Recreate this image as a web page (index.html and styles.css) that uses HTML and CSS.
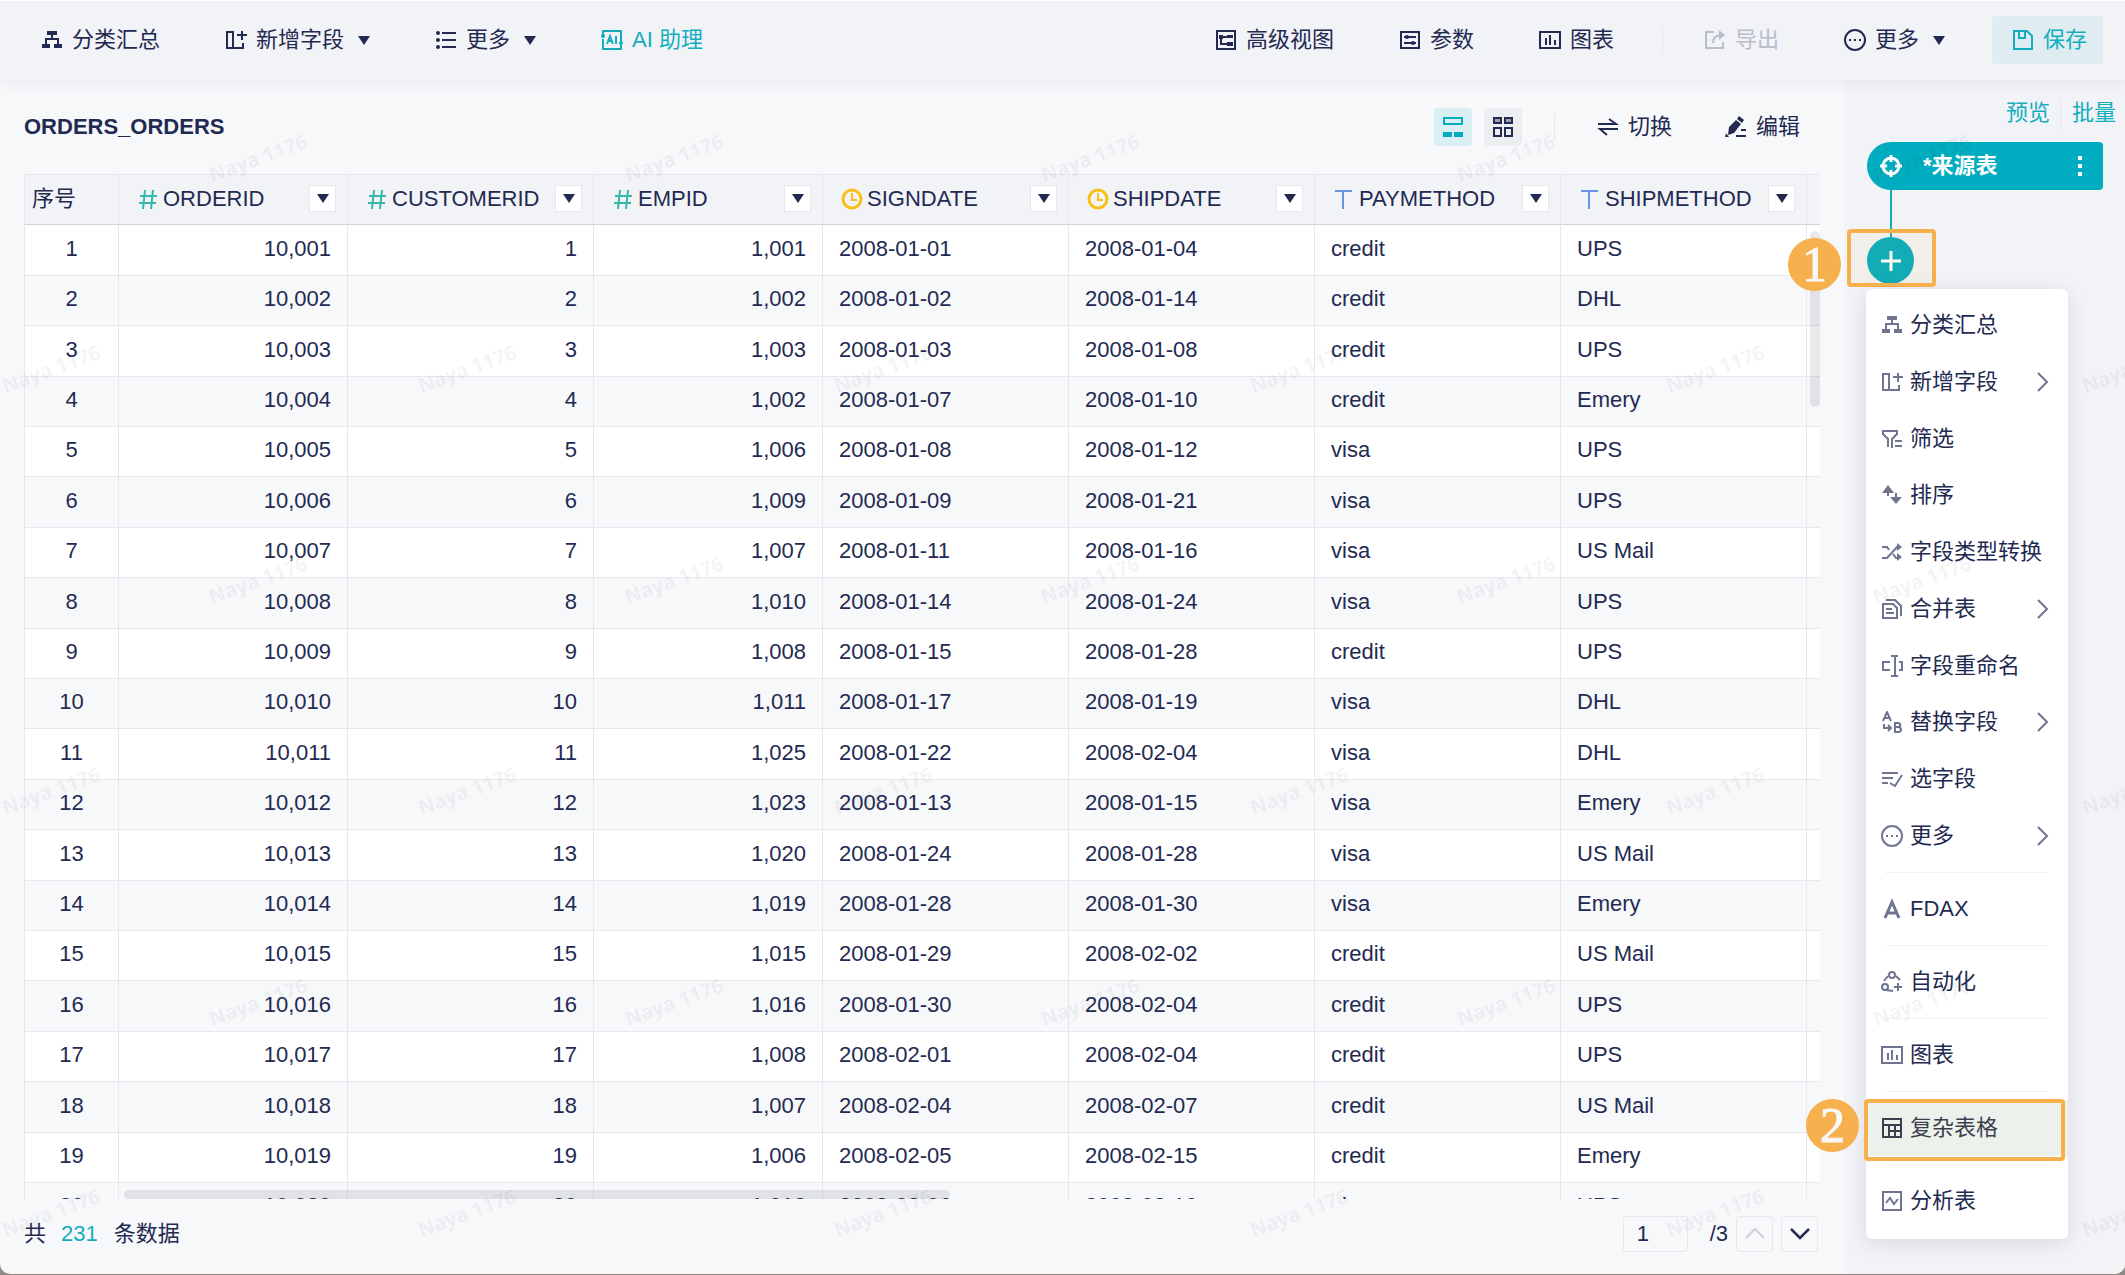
FILE: index.html
```html
<!DOCTYPE html>
<html lang="zh-CN">
<head>
    <meta charset="UTF-8">
    <meta name="viewport" content="width=device-width, initial-scale=1.0">
    <title>ORDERS_ORDERS</title>
    <link rel="stylesheet" href="styles.css">
</head>
<body>
    <!-- 图标库 -->
    <svg class="icon-library" aria-hidden="true">
        <symbol id="icon-group" viewBox="0 0 22 22">
            <path d="M6 2h10v4H6zM1 15h8v4H1zM13 15h8v4h-8z" fill="currentColor"/>
            <path d="M11 6v4M5 16v-6h12v6" fill="none" stroke="currentColor" stroke-width="2"/>
        </symbol>
        <symbol id="icon-add-field" viewBox="0 0 22 22">
            <path d="M2 3h6v16H2zM8 19h10v-5M17 2v9M12 6h10" fill="none" stroke="currentColor" stroke-width="2"/>
        </symbol>
        <symbol id="icon-list" viewBox="0 0 22 22">
            <circle cx="3" cy="4" r="2" fill="currentColor"/>
            <circle cx="3" cy="11" r="2" fill="currentColor"/>
            <circle cx="3" cy="18" r="2" fill="currentColor"/>
            <path d="M7 4h14M7 11h14M7 18h14" stroke="currentColor" stroke-width="2"/>
        </symbol>
        <symbol id="icon-ai" viewBox="0 0 22 22">
            <path d="M2 6V2h18v10M20 16v4H2V10" fill="none" stroke="currentColor" stroke-width="2"/>
            <circle cx="2" cy="7" r="2" fill="currentColor"/>
            <circle cx="20" cy="14" r="2" fill="currentColor"/>
            <path d="M6 15l3-8 3 8M7 12h4M15 7v8" fill="none" stroke="currentColor" stroke-width="2"/>
        </symbol>
        <symbol id="icon-advanced" viewBox="0 0 22 22">
            <path d="M2 2h18v18H2zM6 8v7h6M6 8h6" fill="none" stroke="currentColor" stroke-width="2"/>
            <path d="M4 6h4v4H4zM12 6h6v3h-6zM12 13h6v4h-6z" fill="currentColor"/>
        </symbol>
        <symbol id="icon-params" viewBox="0 0 22 22">
            <path d="M2 3h18v16H2zM5 8h12M5 14h12" fill="none" stroke="currentColor" stroke-width="2"/>
            <circle cx="8" cy="8" r="2" fill="currentColor"/>
            <circle cx="14" cy="14" r="2" fill="currentColor"/>
        </symbol>
        <symbol id="icon-chart" viewBox="0 0 22 22">
            <path d="M1 3h20v16H1zM7 9v7M11 6v10M16 11v5" fill="none" stroke="currentColor" stroke-width="2"/>
        </symbol>
        <symbol id="icon-export" viewBox="0 0 22 22">
            <path d="M10 3H2v16h17v-6M9 14c0-5 3-8 9-8" fill="none" stroke="currentColor" stroke-width="2"/>
            <path d="M15 1l6 5-6 5z" fill="currentColor"/>
        </symbol>
        <symbol id="icon-more" viewBox="0 0 22 22">
            <circle cx="11" cy="11" r="10" fill="none" stroke="currentColor" stroke-width="2"/>
            <path d="M5 10h2v2H5zM10 10h2v2h-2zM15 10h2v2h-2z" fill="currentColor"/>
        </symbol>
        <symbol id="icon-save" viewBox="0 0 22 22">
            <path d="M2 2h13l5 5v13H2zM7 3v6h6V3" fill="none" stroke="currentColor" stroke-width="2"/>
        </symbol>
        <symbol id="icon-rows" viewBox="0 0 22 22">
            <path d="M2 2h18v6H2z" fill="none" stroke="currentColor" stroke-width="2"/>
            <path d="M1 16h9v5H1zM12 16h9v5h-9z" fill="currentColor"/>
        </symbol>
        <symbol id="icon-grid" viewBox="0 0 22 22">
            <path d="M2 2h7v5H2zM13 2h7v5h-7z" fill="#9c9fb3" stroke="currentColor" stroke-width="2"/>
            <path d="M2 12h7v8H2zM13 12h7v8h-7z" fill="none" stroke="currentColor" stroke-width="2"/>
        </symbol>
        <symbol id="icon-switch" viewBox="0 0 22 22">
            <path d="M1 8h18L12 3M21 13H3l7 6" fill="none" stroke="currentColor" stroke-width="2"/>
        </symbol>
        <symbol id="icon-edit" viewBox="0 0 22 22">
            <path d="M4 11l7-7 5 4-7 9-6 2zM12 3l2-3 5 4-2 3zM1 17l3 4H0z" fill="currentColor"/>
            <path d="M16 14h5M11 20h10" stroke="currentColor" stroke-width="2"/>
        </symbol>
        <symbol id="icon-filter" viewBox="0 0 22 22">
            <path d="M7 19v-8L2 6V3h14v3l-5 5v9M14 13h7M14 18h7" fill="none" stroke="currentColor" stroke-width="2"/>
        </symbol>
        <symbol id="icon-sort" viewBox="0 0 22 22">
            <path d="M7 1l6 8H8v3H6V9H1zM15 20l-6-7h5V9h2v4h5z" fill="currentColor"/>
        </symbol>
        <symbol id="icon-convert" viewBox="0 0 22 22">
            <path d="M1 6h5l2 3M1 17h5L16 6h2M12 13l3 4h3" fill="none" stroke="currentColor" stroke-width="2"/>
            <path d="M16 2l5 4-5 4zM16 12l5 4-5 4z" fill="currentColor"/>
        </symbol>
        <symbol id="icon-merge" viewBox="0 0 22 22">
            <path d="M2 6h10l4 4v10H2zM5 11h6M5 15h8M5 2h9l6 6v10" fill="none" stroke="currentColor" stroke-width="2"/>
        </symbol>
        <symbol id="icon-rename" viewBox="0 0 22 22">
            <path d="M9 7H2v8h7M18 7h3v8h-3M10 1h7M10 21h7M14 1v20" fill="none" stroke="currentColor" stroke-width="2"/>
        </symbol>
        <symbol id="icon-replace" viewBox="0 0 22 22">
            <path d="M2 10l4-9 4 9M3 7h6M14 12v9h3c4 0 4-5 0-5h-3h3c3 0 3-4 0-4zM3 13v4h7M7 14l3 3-3 3" fill="none" stroke="currentColor" stroke-width="2"/>
        </symbol>
        <symbol id="icon-select" viewBox="0 0 22 22">
            <path d="M1 5h16M1 10h11M1 15h6M9 15l5 3 7-11" fill="none" stroke="currentColor" stroke-width="2"/>
        </symbol>
        <symbol id="icon-fdax" viewBox="0 0 22 22">
            <path d="M4 20l7-16 7 16M6 15h10" fill="none" stroke="currentColor" stroke-width="3"/>
        </symbol>
        <symbol id="icon-auto" viewBox="0 0 22 22">
            <circle cx="11" cy="4" r="3" fill="none" stroke="currentColor" stroke-width="2"/>
            <circle cx="4" cy="16" r="3" fill="none" stroke="currentColor" stroke-width="2"/>
            <path d="M7 5L3 10M15 5l4 4M5 19l7 1M17 12v8M13 16h8" fill="none" stroke="currentColor" stroke-width="2"/>
        </symbol>
        <symbol id="icon-complex" viewBox="0 0 22 22">
            <path d="M2 2h18v18H2zM2 8h18M8 8v12M8 14h12M14 8v12" fill="none" stroke="currentColor" stroke-width="2"/>
        </symbol>
        <symbol id="icon-analysis" viewBox="0 0 22 22">
            <path d="M2 2h18v18H2zM5 13l4-5 4 6 4-5" fill="none" stroke="currentColor" stroke-width="2"/>
        </symbol>
        <symbol id="icon-target" viewBox="0 0 22 22">
            <circle cx="11" cy="11" r="8" fill="none" stroke="currentColor" stroke-width="3"/>
            <path d="M11 0v7M11 15v7M0 11h7M15 11h7" stroke="currentColor" stroke-width="3"/>
        </symbol>
        <symbol id="icon-plus" viewBox="0 0 22 22">
            <path d="M11 1v20M1 11h20" stroke="currentColor" stroke-width="3"/>
        </symbol>
        <symbol id="icon-right" viewBox="0 0 22 22">
            <path d="M7 2l9 9-9 9" fill="none" stroke="currentColor" stroke-width="2"/>
        </symbol>
        <symbol id="icon-up" viewBox="0 0 22 22">
            <path d="M2 15l9-9 9 9" fill="none" stroke="currentColor" stroke-width="2"/>
        </symbol>
        <symbol id="icon-down" viewBox="0 0 22 22">
            <path d="M2 6l9 9 9-9" fill="none" stroke="currentColor" stroke-width="2.5"/>
        </symbol>
        <symbol id="icon-number" viewBox="0 0 22 22">
            <path d="M8 2L6 21M16 2l-2 19M3 8h17M2 15h17" fill="none" stroke="#35b8a9" stroke-width="2"/>
        </symbol>
        <symbol id="icon-date" viewBox="0 0 22 22">
            <circle cx="11" cy="11" r="9" fill="none" stroke="#fcbf17" stroke-width="3"/>
            <path d="M11 5v7h5" fill="none" stroke="#fcbf17" stroke-width="2"/>
        </symbol>
        <symbol id="icon-text" viewBox="0 0 22 22">
            <path d="M2 3h17M10 3v18" fill="none" stroke="#6c93e2" stroke-width="2"/>
        </symbol>
    </svg>

    <div class="page">
        <!-- 顶部工具栏 -->
        <header class="toolbar">
            <div class="toolbar-group">
                <button class="tool"><svg class="icon"><use href="#icon-group"/></svg>分类汇总</button>
                <button class="tool"><svg class="icon"><use href="#icon-add-field"/></svg>新增字段<span class="caret"></span></button>
                <button class="tool"><svg class="icon"><use href="#icon-list"/></svg>更多<span class="caret"></span></button>
                <button class="tool tool-ai"><svg class="icon"><use href="#icon-ai"/></svg>AI 助理</button>
            </div>
            <div class="toolbar-group">
                <button class="tool"><svg class="icon"><use href="#icon-advanced"/></svg>高级视图</button>
                <button class="tool"><svg class="icon"><use href="#icon-params"/></svg>参数</button>
                <button class="tool"><svg class="icon"><use href="#icon-chart"/></svg>图表</button>
                <div class="export-wrap">
                    <button class="tool" disabled><svg class="icon"><use href="#icon-export"/></svg>导出</button>
                </div>
                <button class="tool"><svg class="icon"><use href="#icon-more"/></svg>更多<span class="caret"></span></button>
                <button class="tool save"><svg class="icon"><use href="#icon-save"/></svg>保存</button>
            </div>
        </header>

        <div class="body">
            <main class="content">
                <div class="content-head">
                    <h1>ORDERS_ORDERS</h1>
                    <div class="view-buttons">
                        <button class="view active" aria-label="表格视图"><svg class="icon"><use href="#icon-rows"/></svg></button>
                        <button class="view" aria-label="卡片视图"><svg class="icon"><use href="#icon-grid"/></svg></button>
                    </div>
                    <div class="head-actions">
                        <button class="tool"><svg class="icon"><use href="#icon-switch"/></svg>切换</button>
                        <button class="tool"><svg class="icon"><use href="#icon-edit"/></svg>编辑</button>
                    </div>
                </div>

                <div class="table-wrap">
                    <table>
                        <colgroup>
                            <col class="col-index"><col class="col-id"><col><col class="col-id"><col><col><col><col><col>
                        </colgroup>
                        <thead>
                            <tr id="tableHead"></tr>
                        </thead>
                        <tbody id="tableBody"></tbody>
                    </table>
                    <div class="scroll-y"></div>
                    <div class="scroll-x"></div>
                </div>

                <footer class="pager">
                    <p>共<span class="total">231</span>条数据</p>
                    <div class="pager-nav">
                        <input type="text" value="1" aria-label="页码">
                        <span class="pages">/3</span>
                        <button class="page-btn" aria-label="上一页" disabled><svg class="icon"><use href="#icon-up"/></svg></button>
                        <button class="page-btn" aria-label="下一页"><svg class="icon"><use href="#icon-down"/></svg></button>
                    </div>
                </footer>
            </main>

            <!-- 右侧步骤区 -->
            <aside class="steps">
                <nav class="step-links">
                    <a href="#">预览</a>
                    <a href="#">批量</a>
                </nav>
                <div class="node">
                    <svg class="icon"><use href="#icon-target"/></svg>
                    <span class="node-name">*来源表</span>
                    <span class="dots"><i></i><i></i><i></i></span>
                </div>
                <div class="node-line"></div>
                <button class="add-step" aria-label="添加步骤"><svg class="icon"><use href="#icon-plus"/></svg></button>

                <div class="menu">
                    <div class="menu-group menu-fields">
                        <button class="menu-item"><svg class="icon"><use href="#icon-group"/></svg>分类汇总</button>
                        <button class="menu-item"><svg class="icon"><use href="#icon-add-field"/></svg>新增字段<svg class="icon arrow"><use href="#icon-right"/></svg></button>
                        <button class="menu-item"><svg class="icon"><use href="#icon-filter"/></svg>筛选</button>
                        <button class="menu-item"><svg class="icon"><use href="#icon-sort"/></svg>排序</button>
                        <button class="menu-item"><svg class="icon"><use href="#icon-convert"/></svg>字段类型转换</button>
                        <button class="menu-item"><svg class="icon"><use href="#icon-merge"/></svg>合并表<svg class="icon arrow"><use href="#icon-right"/></svg></button>
                        <button class="menu-item"><svg class="icon"><use href="#icon-rename"/></svg>字段重命名</button>
                        <button class="menu-item"><svg class="icon"><use href="#icon-replace"/></svg>替换字段<svg class="icon arrow"><use href="#icon-right"/></svg></button>
                        <button class="menu-item"><svg class="icon"><use href="#icon-select"/></svg>选字段</button>
                        <button class="menu-item"><svg class="icon"><use href="#icon-more"/></svg>更多<svg class="icon arrow"><use href="#icon-right"/></svg></button>
                    </div>
                    <div class="menu-group"><button class="menu-item"><svg class="icon"><use href="#icon-fdax"/></svg>FDAX</button></div>
                    <div class="menu-group"><button class="menu-item"><svg class="icon"><use href="#icon-auto"/></svg>自动化</button></div>
                    <div class="menu-group"><button class="menu-item"><svg class="icon"><use href="#icon-chart"/></svg>图表</button></div>
                    <div class="menu-group"><button class="menu-item current"><svg class="icon"><use href="#icon-complex"/></svg>复杂表格</button></div>
                    <div class="menu-group"><button class="menu-item"><svg class="icon"><use href="#icon-analysis"/></svg>分析表</button></div>
                </div>

                <!-- 操作标注 -->
                <div class="mark mark-add"></div>
                <div class="badge badge-add">1</div>
                <div class="mark mark-table"></div>
                <div class="badge badge-table">2</div>
            </aside>
        </div>
    </div>

    <!-- 水印 -->
    <svg class="watermark" aria-hidden="true">
        <defs>
            <pattern id="wm" width="416" height="422" patternUnits="userSpaceOnUse">
                <text x="258" y="165" transform="rotate(-20 258 158)">Naya 1176</text>
                <text x="51" y="376" transform="rotate(-20 51 369)">Naya 1176</text>
            </pattern>
        </defs>
        <rect width="100%" height="100%" fill="url(#wm)"/>
    </svg>

    <script>
        const columns = [
            ['ORDERID', 'number'],
            ['CUSTOMERID', 'number'],
            ['EMPID', 'number'],
            ['SIGNDATE', 'date'],
            ['SHIPDATE', 'date'],
            ['PAYMETHOD', 'text'],
            ['SHIPMETHOD', 'text']
        ];

        const rows = [
            ['10,001', '1', '1,001', '2008-01-01', '2008-01-04', 'credit', 'UPS'],
            ['10,002', '2', '1,002', '2008-01-02', '2008-01-14', 'credit', 'DHL'],
            ['10,003', '3', '1,003', '2008-01-03', '2008-01-08', 'credit', 'UPS'],
            ['10,004', '4', '1,002', '2008-01-07', '2008-01-10', 'credit', 'Emery'],
            ['10,005', '5', '1,006', '2008-01-08', '2008-01-12', 'visa', 'UPS'],
            ['10,006', '6', '1,009', '2008-01-09', '2008-01-21', 'visa', 'UPS'],
            ['10,007', '7', '1,007', '2008-01-11', '2008-01-16', 'visa', 'US Mail'],
            ['10,008', '8', '1,010', '2008-01-14', '2008-01-24', 'visa', 'UPS'],
            ['10,009', '9', '1,008', '2008-01-15', '2008-01-28', 'credit', 'UPS'],
            ['10,010', '10', '1,011', '2008-01-17', '2008-01-19', 'visa', 'DHL'],
            ['10,011', '11', '1,025', '2008-01-22', '2008-02-04', 'visa', 'DHL'],
            ['10,012', '12', '1,023', '2008-01-13', '2008-01-15', 'visa', 'Emery'],
            ['10,013', '13', '1,020', '2008-01-24', '2008-01-28', 'visa', 'US Mail'],
            ['10,014', '14', '1,019', '2008-01-28', '2008-01-30', 'visa', 'Emery'],
            ['10,015', '15', '1,015', '2008-01-29', '2008-02-02', 'credit', 'US Mail'],
            ['10,016', '16', '1,016', '2008-01-30', '2008-02-04', 'credit', 'UPS'],
            ['10,017', '17', '1,008', '2008-02-01', '2008-02-04', 'credit', 'UPS'],
            ['10,018', '18', '1,007', '2008-02-04', '2008-02-07', 'credit', 'US Mail'],
            ['10,019', '19', '1,006', '2008-02-05', '2008-02-15', 'credit', 'Emery'],
            ['10,020', '20', '1,012', '2008-02-06', '2008-02-10', 'visa', 'UPS']
        ];

        // 生成表头
        let head = '<th>序号</th>';
        columns.forEach(([name, type]) => {
            head += `<th><div class="field"><svg class="icon"><use href="#icon-${type}"/></svg>${name}<button class="field-menu" aria-label="${name}"><span class="caret"></span></button></div></th>`;
        });
        document.getElementById('tableHead').innerHTML = head + '<th></th>';

        // 生成数据行
        let body = '';
        rows.forEach((row, index) => {
            body += `<tr><td class="index">${index + 1}</td>`;
            row.forEach((value, i) => {
                body += `<td class="${columns[i][1]}">${value}</td>`;
            });
            body += '<td></td></tr>';
        });
        document.getElementById('tableBody').innerHTML = body;
    </script>
</body>
</html>
```
FILE: styles.css
```css
* {
    box-sizing: border-box;
}
body {
    margin: 0;
    height: 100vh;
    overflow: hidden;
    background-color: #8d8a86;
    color: #232a52;
    font-family: "Liberation Sans", "Noto Sans CJK SC", sans-serif;
    font-size: 22px;
    line-height: 32px;
}
button {
    border: 0;
    padding: 0;
    background: none;
    color: inherit;
    font: inherit;
    cursor: pointer;
}
h1, p {
    margin: 0;
}
.icon-library {
    display: none;
}
.icon {
    flex: none;
    width: 22px;
    height: 22px;
}
.caret {
    flex: none;
    border: 6px solid transparent;
    border-top: 9px solid currentColor;
    border-bottom: 0;
}
.page {
    display: flex;
    flex-direction: column;
    height: calc(100vh - 1px);
    overflow: hidden;
    border-radius: 0 0 10px 10px;
    background-color: #f7f8fa;
}

/* 工具栏 */
.toolbar {
    position: relative;
    z-index: 1;
    display: flex;
    flex: none;
    align-items: center;
    justify-content: space-between;
    height: 80px;
    padding: 0 22px 1px 41px;
    border-top: 1px solid #fff;
    background-color: #f2f3f7;
    box-shadow: 0 4px 16px rgba(35, 42, 82, 0.06);
}
.toolbar-group {
    display: flex;
    align-items: center;
    gap: 65px;
}
.tool {
    display: flex;
    align-items: center;
    gap: 9px;
    white-space: nowrap;
}
.tool .caret {
    margin-left: 5px;
}
.tool:disabled {
    color: #b9bcca;
    cursor: default;
}
.tool-ai {
    color: #12aebd;
}
.export-wrap {
    display: flex;
    align-items: center;
    margin-left: -17px;
}
.export-wrap::before {
    content: "";
    width: 1px;
    height: 26px;
    margin-right: 41px;
    background-color: #e4e6ec;
}
.save {
    height: 48px;
    margin-left: -18px;
    padding: 0 16px 0 20px;
    border-radius: 4px;
    background-color: #dfedf2;
    color: #12aebd;
}

/* 主体 */
.body {
    display: flex;
    flex: 1;
    min-height: 0;
}
.content {
    display: flex;
    flex: 1;
    flex-direction: column;
    min-width: 0;
    padding: 0 24px;
}
.content-head {
    display: flex;
    flex: none;
    align-items: center;
    height: 94px;
    padding-right: 20px;
}
.content-head h1 {
    font-size: 22px;
    font-weight: bold;
}
.view-buttons {
    display: flex;
    gap: 12px;
    margin-left: auto;
}
.view {
    display: flex;
    align-items: center;
    justify-content: center;
    width: 38px;
    height: 38px;
    border-radius: 4px;
    background-color: #edeef2;
}
.view.active {
    background-color: #d9eff3;
    color: #00acbf;
}
.head-actions {
    display: flex;
    align-items: center;
    gap: 53px;
    margin-left: 32px;
}
.head-actions::before {
    content: "";
    width: 1px;
    height: 26px;
    margin-right: -11px;
    background-color: #e4e6ec;
}

/* 数据表 */
.table-wrap {
    position: relative;
    flex: 1;
    min-height: 0;
    overflow: hidden;
}
table {
    width: 2029px;
    table-layout: fixed;
    border-collapse: separate;
    border-spacing: 0;
    border-top: 1px solid #e6e8ed;
    border-left: 1px solid #e6e8ed;
}
.col-index {
    width: 94px;
}
.col-id {
    width: 229px;
}
th, td {
    height: 50px;
    padding: 0 16px 3px;
    border-right: 1px solid #e6e8ed;
    border-bottom: 1px solid #e6e8ed;
    text-align: left;
    font-weight: normal;
    line-height: 30px;
    white-space: nowrap;
}
th {
    padding: 0 11px 2px 18px;
    border-bottom-color: #d0d3dc;
    background-color: #f2f3f7;
}
th:first-child {
    padding-left: 7px;
}
.field {
    display: flex;
    align-items: center;
    gap: 4px;
}
.field-menu {
    display: flex;
    align-items: center;
    justify-content: center;
    width: 27px;
    height: 27px;
    margin-left: auto;
    border: 1px solid #e6e8ed;
    background-color: #fff;
}
tbody tr {
    background-color: #fff;
}
tbody tr:nth-child(even) {
    background-color: #f7f8fa;
}
/* 行高 50 / 51 交替 */
tbody tr:nth-child(5n+1) td,
tbody tr:nth-child(5n+3) td {
    height: 51px;
}
td.index {
    padding: 0 0 3px;
    text-align: center;
}
td.number {
    text-align: right;
}
.scroll-y {
    position: absolute;
    top: 57px;
    right: 0;
    width: 10px;
    height: 176px;
    border-radius: 5px;
    background-color: rgba(35, 38, 50, 0.1);
}
.scroll-x {
    position: absolute;
    bottom: 0;
    left: 100px;
    width: 46%;
    height: 9px;
    border-radius: 5px;
    background-color: rgba(35, 38, 50, 0.1);
}

/* 分页 */
.pager {
    display: flex;
    flex: none;
    align-items: center;
    justify-content: space-between;
    height: 75px;
    padding: 0 2px 6px 0;
}
.total {
    margin: 0 16px 0 15px;
    color: #12aebd;
}
.pager-nav {
    display: flex;
    align-items: center;
    gap: 8px;
}
.pager-nav input {
    width: 65px;
    height: 36px;
    padding: 0 13px;
    border: 1px solid #e6e8ed;
    border-radius: 3px;
    background: none;
    color: inherit;
    font: inherit;
}
.pages {
    margin-left: 14px;
}
.page-btn {
    display: flex;
    align-items: center;
    justify-content: center;
    width: 37px;
    height: 36px;
    border: 1px solid #e6e8ed;
    border-radius: 3px;
}
.page-btn:disabled {
    color: #cdd0da;
}

/* 右侧步骤区 */
.steps {
    position: relative;
    flex: none;
    width: 281px;
    background-color: #f2f3f7;
}
.step-links {
    display: flex;
    justify-content: flex-end;
    padding: 17px 9px 0 0;
}
.step-links a {
    color: #12aebd;
    text-decoration: none;
}
.step-links a + a {
    margin-left: 10px;
    padding-left: 11px;
    border-left: 1px solid #e4e6ec;
}
.node {
    display: flex;
    align-items: center;
    height: 48px;
    margin: 13px 22px 0 23px;
    padding: 0 21px 0 13px;
    border-radius: 24px 4px 4px 24px;
    background-color: #00acbf;
    color: #fff;
}
.node-name {
    margin-left: 21px;
    font-weight: bold;
}
.dots {
    display: flex;
    flex-direction: column;
    gap: 4px;
    margin-left: auto;
}
.dots i {
    width: 4px;
    height: 4px;
    background-color: #fff;
}
.node-line {
    width: 2px;
    height: 47px;
    margin-left: 46px;
    background-color: #12aebd;
}
.add-step {
    display: flex;
    align-items: center;
    justify-content: center;
    width: 47px;
    height: 47px;
    margin-left: 23px;
    border-radius: 50%;
    background-color: #00acbf;
    color: #fff;
}

/* 下拉菜单 */
.menu {
    position: absolute;
    top: 209px;
    left: 22px;
    width: 202px;
    padding: 8px 0 10px;
    border-radius: 6px;
    background-color: #fff;
    box-shadow: 0 4px 20px rgba(35, 42, 82, 0.12);
}
.menu-group + .menu-group::before {
    content: "";
    display: block;
    height: 1px;
    margin: 8px 19px;
    background-color: #f2f3f7;
}
.menu-fields {
    display: flex;
    flex-direction: column;
    height: 567px;
}
.menu-fields .menu-item {
    flex: 1;
}
.menu-item {
    display: flex;
    align-items: center;
    gap: 7px;
    width: 100%;
    height: 56px;
    padding: 0 15px;
    white-space: nowrap;
}
.menu-item .icon {
    color: #6f7490;
}
.menu-item .arrow {
    margin-left: auto;
}
.menu-item.current,
.menu-item.current .icon {
    background-color: #edf1ec;
    color: #3c404c;
}

/* 标注 */
.mark {
    position: absolute;
    border: 4px solid #f6b04d;
    border-radius: 4px;
}
.mark-add {
    top: 149px;
    left: 3px;
    width: 89px;
    height: 58px;
    background-color: rgba(246, 176, 77, 0.08);
}
.mark-table {
    top: 1019px;
    left: 20px;
    width: 201px;
    height: 62px;
}
.badge {
    position: absolute;
    width: 53px;
    height: 53px;
    border-radius: 50%;
    background-color: #f6b04d;
    color: #f7f8fa;
    font-family: "Liberation Serif", serif;
    font-size: 50px;
    line-height: 53px;
    text-align: center;
    -webkit-text-stroke: 1px #f7f8fa;
}
.badge-add {
    top: 158px;
    left: -56px;
}
.badge-table {
    top: 1019px;
    left: -38px;
}

/* 水印 */
.watermark {
    position: fixed;
    z-index: 2;
    top: 0;
    left: 0;
    width: 100%;
    height: 100%;
    pointer-events: none;
}
.watermark text {
    fill: rgba(35, 38, 50, 0.05);
    font-family: "Open Sans", sans-serif;
    font-size: 20px;
    font-weight: bold;
    text-anchor: middle;
}
```
